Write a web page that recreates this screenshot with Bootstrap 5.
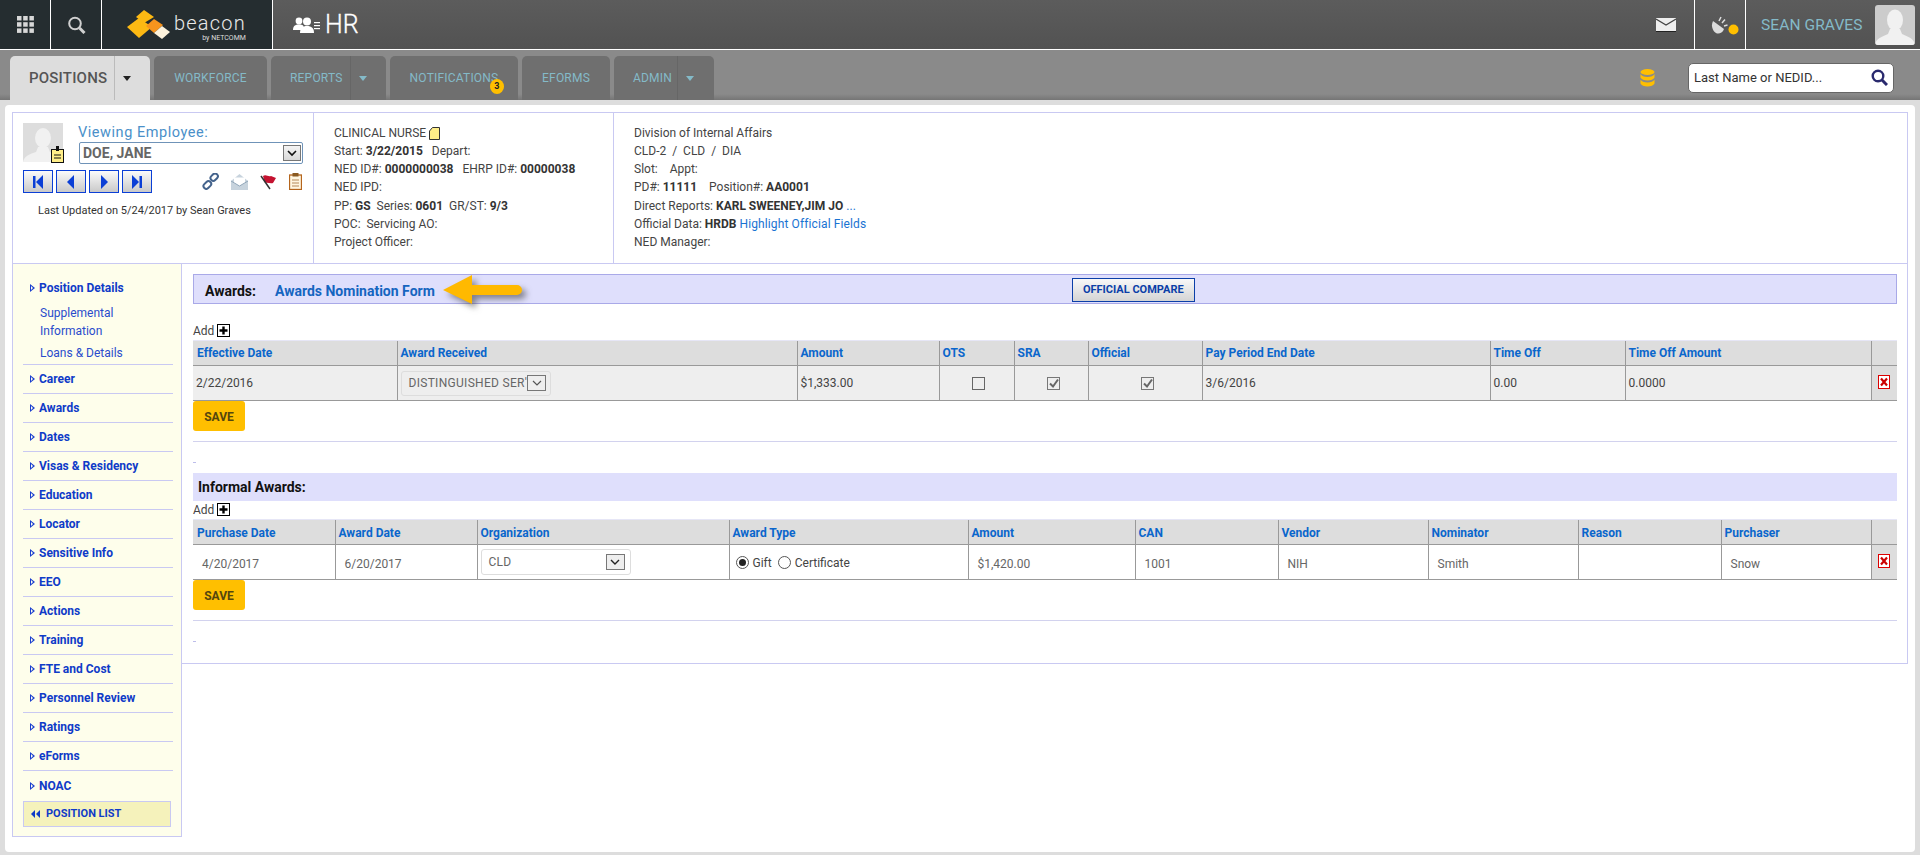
<!DOCTYPE html>
<html lang="en">
<head>
<meta charset="utf-8">
<title>Beacon HR</title>
<link href="https://cdn.jsdelivr.net/npm/bootstrap@5.3.0/dist/css/bootstrap.min.css" rel="stylesheet">
<style>
html,body{height:855px;overflow:hidden}
body{font-family:Roboto,"Liberation Sans",sans-serif;font-size:12px;color:#444;background:#ddd;line-height:18px}
a{text-decoration:none}
.topbar{height:50px;background:linear-gradient(#5c5c5c,#525252);border-bottom:1px solid #fff}
.darkcell{background:#252d30;border-right:1px solid #fff;height:49px}
.cell-a{width:51px}
.cell-b{width:51px}
.cell-logo{width:171px;padding-left:25px}
.logo-word{color:#e9e9e9;font-size:20px;font-weight:300;line-height:24px;letter-spacing:1.2px}
.logo-by{color:#ddd;font-size:7px;line-height:7px;text-align:right}
.logo-text{margin-left:3px;padding-top:3px}
.hr-icon{margin-left:20px}
.hr-title{color:#fff;font-size:25px;font-weight:300;margin-left:5px;-webkit-text-stroke:.3px #fff}
.mail-cell{width:40px;margin-right:8px}
.right-cell{height:49px;border-left:1px solid #fff;width:51px}
.sat-cell{padding-left:9px}
.user-cell{width:175px;padding-left:15px;padding-right:5px;color:#84bac8;font-size:15.5px;letter-spacing:.1px}
.user-pic{width:40px;height:40px;background:#ccc;border-radius:3px;overflow:hidden}
.tabbar{height:50px;background:linear-gradient(#8a8a8a 88%,#757575);padding:0 26px 0 10px}
.tabset{gap:4px;height:44px}
.tabitem{background:#6f6f6f;border-radius:5px 5px 0 0;color:#84bac8;height:44px;font-size:12px;letter-spacing:.2px;position:relative}
.tabitem.now{background:#ddd;color:#555;font-size:15px;font-weight:500;letter-spacing:.2px}
.tablabel{padding:0 19px}
.tabcaret{border-left:1px solid #666;height:100%;display:flex;align-items:center;padding-left:8px}
.caret-dn{width:0;height:0;border-left:4px solid transparent;border-right:4px solid transparent;border-top:5px solid currentColor}
.tabbadge{position:absolute;left:100px;top:23px;width:14px;height:15px;border-radius:50%;background:#ffbf00;color:#222;font-size:9px;font-weight:700;line-height:15px;text-align:center}
.quick{width:206px;height:30px;background:#fff;border:1px solid #666;border-radius:5px;padding:0 5px;font-size:13px;color:#333;margin-left:33px}
.sheet{background:#fff;margin:5px 5px 0;height:747px;border-radius:4px;padding:7px 7px 0}
.hbox{height:152px;border:1px solid #c9c9f2}
.hcol1{width:301px;border-right:1px solid #c9c9f2;padding:10px 10px 0}
.hcol2{width:300px;border-right:1px solid #c9c9f2;padding:11px 0 0 20px}
.hcol3{padding:11px 0 0 20px}
.info-line{height:18.17px;white-space:nowrap}
.info-line b{font-weight:700;color:#333}
.linky{color:#1a73d2;letter-spacing:.12px}
.pic-wrap{width:40px;height:39px;background:#ddd;position:relative;margin-right:15px}
.pic-badge{position:absolute;right:-1px;bottom:-1px}
.view-lbl{color:#4a90c9;font-size:14.5px;line-height:19px;letter-spacing:.55px}
.emp-select{width:224px;height:22px;margin-left:1px;border:1px solid #6f93b8;border-radius:2px;font-weight:700;font-size:14px;color:#666;padding-left:3px;line-height:20px}
.drop-box{border:1px solid #777;background:linear-gradient(#f4f4f4,#d8d8d8);width:18px;height:16px;display:flex;align-items:center;justify-content:center;margin-right:1px}
.navbtn{width:30px;height:23px;padding:0;border:1px solid #0b3fd6;border-radius:0;background:linear-gradient(#fbfbfb,#c9c9c9);display:flex;align-items:center;justify-content:center}
.navrow{gap:3px;margin-top:6px}
.tools{gap:12px;margin-left:47px}
.updated{margin:9px 0 0 15px;color:#333;font-size:11px}
.lower{align-items:flex-start}
.sidepane{width:170px;height:573px;background:#fefeeb;border:1px solid #c9c9f2;border-top:0;padding:14px 8px 0 10px;flex:none}
.sidepane .list-group-item{background:transparent;border:0;border-bottom:1px solid #c9c9f2;border-radius:0;height:29px;padding:0 0 0 7px;color:#0f3bc8;font-weight:700;font-size:12px;display:flex;align-items:center;gap:4px}
.sidepane .list-group-item.first{height:auto;display:block;padding-bottom:2px}
.tri{width:0;height:0;border-left:5px solid #1a3fcf;border-top:4px solid transparent;border-bottom:4px solid transparent;position:relative;flex:none;display:block}
.tri::after{content:"";position:absolute;left:-4px;top:-2px;border-left:2.5px solid #fefeeb;border-top:2px solid transparent;border-bottom:2px solid transparent}
.firsthead{display:flex;align-items:center;gap:4px;height:20px}
.subnav{display:block;font-weight:400;color:#2a4ccc;padding-left:10px;line-height:18px}
.subgap{margin-top:6px}
.subgap2{margin-top:4px}
.plist{width:148px;height:26px;margin-top:1px;background:#f5f2bb;border:1px solid #c9c9f2;color:#0f3bc8;font-weight:700;padding-left:7px;gap:6px;display:flex;align-items:center;font-size:11px}
.mainpane{flex:1;height:400px;border-right:1px solid #c9c9f2;border-bottom:1px solid #c9c9f2;padding:10px 10px 0 11px}
.titlebar{height:30px;background:#dfdffc;border:1px solid #a9a9e8;padding-left:11px;font-size:14px}
.titlebar b{color:#111;font-weight:700;padding-top:3px}
.titlebar a{color:#1565c0;font-weight:700;margin-left:19px;padding-top:3px}
.arrow{margin-left:8px;flex:none;overflow:visible;filter:drop-shadow(4px 4px 3px rgba(50,50,50,.55))}
.comparebtn{margin-left:550px;margin-top:2px;width:123px;height:24px;padding:0;border:1.5px solid #0b3fa8;border-radius:0;background:linear-gradient(#f8f8f8,#d4d4d4);color:#0b3fa8;font-size:11px;font-weight:700;line-height:20px}
.addrow{gap:3px;color:#444;height:36px;align-items:flex-end}
.addrow.tight{height:18px}
.addbox{width:13px;height:13px;margin-bottom:3px}
.table.awardgrid{table-layout:fixed;width:1704px;margin:0;font-size:12px;color:#444;border-collapse:collapse;--bs-table-bg:transparent}
.table.awardgrid>:not(caption)>*>*{padding:0 3px;border:0;border-left:1px solid #999;vertical-align:middle;box-shadow:none;white-space:nowrap;overflow:hidden}
.table.awardgrid>:not(caption)>*>*:first-child{border-left:0}
.table.awardgrid thead th{background:#ddd;color:#0a66cc;font-weight:700;height:25px;padding:0 3px;border-bottom:1px solid #999;border-top:1px solid #e6e6f6}
.table.awardgrid thead th:first-child{padding-left:4px}
.table.awardgrid.plain thead th{padding-top:1px}
.table.awardgrid tbody td{height:35px;background:#eee;border-bottom:1px solid #999}
.table.awardgrid.plain tbody td{background:#fff;color:#666;padding-top:4px}
.table.awardgrid tbody td.delcol,.table.awardgrid.plain tbody td.delcol{background:#ddd;text-align:center;padding:0 0 4px}
.table.awardgrid.plain tbody td.pad-in{padding-left:9px}
.table.awardgrid.plain tbody td.pad-tight{padding:0 3px}
.pick{display:inline-flex;align-items:center;border:1px solid #ddd;border-radius:3px;height:25px;color:#666;letter-spacing:.3px;background:#eee}
.pick-a{width:150px;padding-left:7px;justify-content:space-between;padding-right:5px;overflow:hidden}
.pick-b{width:150px;background:#fff;padding-left:7px;padding-right:5px;justify-content:space-between;height:26px}
.drop-lite{border:1px solid #777;width:19px;height:16px;display:flex;align-items:center;justify-content:center;flex:none;background:#eee}
.savebtn{background:#ffbf00;color:#54460f;font-weight:700;font-size:12px;border:0;border-radius:3px;height:30px;padding:1px 0 0;display:block;width:52px}
.rule{border:0;border-top:1px solid #d2d2ee;opacity:1;margin:10px 0 0}
.dash{width:3px;height:1px;background:#bdbdea;margin-top:20px}
.infobar{height:28px;background:#dfdffc;color:#111;font-weight:700;font-size:14px;padding-left:5px;margin-top:10px}
.optrow{gap:4px;color:#444;padding-left:3px;padding-top:1px}
.optgap{margin-right:2px}
.table.awardgrid tbody td.centerc{text-align:center;padding-left:7px}
</style>
</head>
<body>
<header class="topbar d-flex align-items-center">
  <div class="darkcell cell-a d-flex align-items-center justify-content-center">
    <svg width="17" height="17" viewBox="0 0 17 17" fill="#d8d8d8"><rect width="4.5" height="4.5"/><rect x="6.2" width="4.5" height="4.5"/><rect x="12.4" width="4.5" height="4.5"/><rect y="6.2" width="4.5" height="4.5"/><rect x="6.2" y="6.2" width="4.5" height="4.5"/><rect x="12.4" y="6.2" width="4.5" height="4.5"/><rect y="12.4" width="4.5" height="4.5"/><rect x="6.2" y="12.4" width="4.5" height="4.5"/><rect x="12.4" y="12.4" width="4.5" height="4.5"/></svg>
  </div>
  <div class="darkcell cell-b d-flex align-items-center justify-content-center">
    <svg width="19" height="18" viewBox="0 0 19 18" fill="none" stroke="#d0d0d0"><circle cx="8" cy="7.5" r="5.8" stroke-width="2"/><path d="M12.5 12l5 5" stroke-width="3"/></svg>
  </div>
  <div class="darkcell cell-logo d-flex align-items-center">
    <svg width="44" height="30" viewBox="0 0 44 30"><polygon points="17,0 27,7 17,13 9,7" fill="#fdb913"/><polygon points="0,17 12,8 25,17 12,28" fill="#fdb913"/><polygon points="19,16 27,9 36,15 27,23" fill="#f7941d"/><polygon points="27,23 35,16 43,22 35,29" fill="#fdf3dc"/></svg>
    <div class="logo-text"><div class="logo-word">beacon</div><div class="logo-by">by NETCOMM</div></div>
  </div>
  <svg class="hr-icon" width="27" height="16" viewBox="0 0 27 16" fill="#fff"><circle cx="6" cy="4" r="3.4"/><path d="M0 13c0-4 2-5.5 6-5.5s5 1 5 5.5z"/><circle cx="14" cy="4.5" r="4"/><path d="M7 16c0-5 2.500-7 7-7s7 2 7 7z"/><rect x="21" y="5" width="6" height="1.200"/><rect x="21" y="8" width="6" height="1.200"/><rect x="21" y="11" width="6" height="1.200"/></svg>
  <div class="hr-title">HR</div>
  <div class="ms-auto d-flex align-items-center justify-content-center mail-cell">
    <svg width="20" height="14" viewBox="0 0 20 14"><rect width="20" height="13" fill="#eee"/><rect y="13" width="20" height="1" fill="#222"/><path d="M0 1l10 6 10-6" fill="none" stroke="#444" stroke-width="1.200"/></svg>
  </div>
  <div class="right-cell sat-cell d-flex align-items-center justify-content-center">
    <svg width="28" height="20" viewBox="0 0 28 20"><path d="M2 6l11 8c-1.500 4-4.500 5-7 4.500C2 17.500-.5 11 2 6z" fill="#ddd"/><path d="M8 6l2-4M11 8l3-3.500M13 11l3.500-1" stroke="#ddd" stroke-width="1.500"/><circle cx="22.500" cy="14.500" r="5" fill="#ffbf00"/></svg>
  </div>
  <div class="right-cell user-cell d-flex align-items-center justify-content-between">
    <span>SEAN GRAVES</span>
    <div class="user-pic"><svg width="40" height="40" viewBox="0 0 40 40" fill="#f1f1f1"><ellipse cx="20" cy="15" rx="8" ry="10.500"/><path d="M0 40c1-7 7-8 13-11l2-5h10l2 5c6 3 12 4 13 11z"/></svg></div>
  </div>
</header>

<nav class="tabbar d-flex align-items-end justify-content-between">
  <div class="tabset d-flex">
    <div class="tabitem now d-flex align-items-center" style="width:140px"><span class="tablabel" style="width:104px">POSITIONS</span><span class="tabcaret" style="width:36px;border-color:#bbb"><i class="caret-dn" style="color:#222"></i></span></div>
    <div class="tabitem d-flex align-items-center justify-content-center" style="width:113px">WORKFORCE</div>
    <div class="tabitem d-flex align-items-center" style="width:115px"><span class="tablabel" style="width:79px">REPORTS</span><span class="tabcaret" style="width:36px"><i class="caret-dn"></i></span></div>
    <div class="tabitem d-flex align-items-center justify-content-center" style="width:128px">NOTIFICATIONS<span class="tabbadge">3</span></div>
    <div class="tabitem d-flex align-items-center justify-content-center" style="width:88px">EFORMS</div>
    <div class="tabitem d-flex align-items-center" style="width:100px"><span class="tablabel" style="width:63px">ADMIN</span><span class="tabcaret" style="width:37px"><i class="caret-dn"></i></span></div>
  </div>
  <div class="d-flex align-items-center" style="height:50px;padding-top:5px">
    <svg width="15" height="18" viewBox="0 0 15 18" fill="#ffbf00"><ellipse cx="7.500" cy="3" rx="7" ry="3"/><path d="M.5 5c1 2 3.500 3 7 3s6-1 7-3v3.500c-1 2-3.500 3-7 3s-6-1-7-3z"/><path d="M.5 10.500c1 2 3.500 3 7 3s6-1 7-3V14.500c-1 2-3.500 3-7 3s-6-1-7-3z"/></svg>
    <div class="quick d-flex align-items-center justify-content-between"><span>Last Name or NEDID...</span>
      <svg width="17" height="17" viewBox="0 0 17 17" fill="none" stroke="#2a2a6e"><circle cx="7" cy="7" r="5.300" stroke-width="2.400"/><path d="M11 11l5 5" stroke-width="3"/></svg>
    </div>
  </div>
</nav>

<main class="sheet">
  <section class="hbox d-flex">
    <div class="hcol1">
      <div class="d-flex">
        <div class="pic-wrap">
          <svg width="40" height="39" viewBox="0 0 40 39" fill="#f1f1f1"><ellipse cx="20" cy="15" rx="8" ry="10"/><path d="M0 39c1-6 7-8 13-10l2-5h10l2 5c6 2 12 4 13 10z"/></svg>
          <svg class="pic-badge" width="13" height="17" viewBox="0 0 13 17"><rect x=".5" y="3.500" width="12" height="13" fill="#ffee88" stroke="#111"/><rect x="5" y="0" width="3" height="5" fill="#111"/><path d="M3 9h7M3 12h7" stroke="#111"/></svg>
        </div>
        <div>
          <div class="view-lbl">Viewing Employee:</div>
          <div class="emp-select d-flex justify-content-between align-items-center"><span>DOE, JANE</span><span class="drop-box"><svg width="10" height="7" viewBox="0 0 10 7"><path d="M1 1l4 4 4-4" fill="none" stroke="#111" stroke-width="1.600"/></svg></span></div>
        </div>
      </div>
      <div class="d-flex navrow align-items-center">
        <button class="btn navbtn" type="button" aria-label="First"><svg width="12" height="14" viewBox="0 0 12 14" fill="#0b3fd6"><rect x="1" y="1" width="2.500" height="12"/><polygon points="11,0 4,7 11,14"/></svg></button>
        <button class="btn navbtn" type="button" aria-label="Previous"><svg width="8" height="14" viewBox="0 0 8 14" fill="#0b3fd6"><polygon points="7,0 0,7 7,14"/></svg></button>
        <button class="btn navbtn" type="button" aria-label="Next"><svg width="8" height="14" viewBox="0 0 8 14" fill="#0b3fd6"><polygon points="1,0 8,7 1,14"/></svg></button>
        <button class="btn navbtn" type="button" aria-label="Last"><svg width="12" height="14" viewBox="0 0 12 14" fill="#0b3fd6"><rect x="8.500" y="1" width="2.500" height="12"/><polygon points="1,0 8,7 1,14"/></svg></button>
        <div class="d-flex tools align-items-center">
          <svg width="17" height="17" viewBox="0 0 17 17" fill="none" stroke="#44638c" stroke-width="2"><rect x="8" y="1.500" width="8" height="5.500" rx="2.700" transform="rotate(-45 12 4)"/><rect x="1" y="9.500" width="8.500" height="5.500" rx="2.700" transform="rotate(-45 5 12)"/></svg>
          <svg width="17" height="16" viewBox="0 0 17 16"><path d="M0 7l8.500-7L17 7v9H0z" fill="#c7d3dd"/><path d="M3 3.500h11V9l-5.500 3L3 9z" fill="#fff"/><path d="M0 7l8.500 5L17 7" fill="none" stroke="#8fa5b8"/></svg>
          <svg width="17" height="16" viewBox="0 0 17 16"><path d="M3 2c3-2 5 1 8 0l5 2-3 5c-3 1-5-1-8 0z" fill="#c41230"/><path d="M1 2l9 13" stroke="#333" stroke-width="1.500"/></svg>
          <svg width="13" height="17" viewBox="0 0 13 17"><rect x=".5" y="2" width="12" height="14.500" fill="#fff6e0" stroke="#b5651d" stroke-width="1.300"/><rect x="3.500" y="0" width="6" height="3.500" fill="#8a5a20"/><path d="M3 7h7M3 10h7M3 13h7" stroke="#b5895a"/></svg>
        </div>
      </div>
      <div class="updated">Last Updated on 5/24/2017 by Sean Graves</div>
    </div>
    <div class="hcol2">
      <div class="info-line d-flex align-items-center" style="gap:3px">CLINICAL NURSE <svg width="11" height="13" viewBox="0 0 11 13"><path d="M.5 4L3.500.5h7v12H.5z" fill="#ffee88" stroke="#333"/></svg></div>
      <div class="info-line">Start: <b>3/22/2015</b> &nbsp; Depart:</div>
      <div class="info-line">NED ID#: <b>0000000038</b> &nbsp; EHRP ID#: <b>00000038</b></div>
      <div class="info-line">NED IPD:</div>
      <div class="info-line">PP: <b>GS</b> &nbsp;Series: <b>0601</b> &nbsp;GR/ST: <b>9/3</b></div>
      <div class="info-line">POC: &nbsp;Servicing AO:</div>
      <div class="info-line">Project Officer:</div>
    </div>
    <div class="hcol3">
      <div class="info-line">Division of Internal Affairs</div>
      <div class="info-line">CLD-2 &nbsp;/ &nbsp;CLD &nbsp;/ &nbsp;DIA</div>
      <div class="info-line">Slot: &nbsp;&nbsp; Appt:</div>
      <div class="info-line">PD#: <b>11111</b> &nbsp;&nbsp; Position#: <b>AA0001</b></div>
      <div class="info-line">Direct Reports: <b>KARL SWEENEY,JIM JO</b> <a class="linky" href="#">...</a></div>
      <div class="info-line">Official Data: <b>HRDB</b> <a class="linky" href="#">Highlight Official Fields</a></div>
      <div class="info-line">NED Manager:</div>
    </div>
  </section>

  <div class="lower d-flex">
    <aside class="sidepane">
      <div class="list-group list-group-flush">
        <div class="list-group-item first">
          <div class="firsthead"><i class="tri"></i>Position Details</div>
          <a class="subnav subgap" href="#">Supplemental<br>Information</a>
          <a class="subnav subgap2" href="#">Loans &amp; Details</a>
        </div>
        <a class="list-group-item" href="#"><i class="tri"></i>Career</a>
        <a class="list-group-item" href="#"><i class="tri"></i>Awards</a>
        <a class="list-group-item" href="#"><i class="tri"></i>Dates</a>
        <a class="list-group-item" href="#"><i class="tri"></i>Visas &amp; Residency</a>
        <a class="list-group-item" href="#"><i class="tri"></i>Education</a>
        <a class="list-group-item" href="#"><i class="tri"></i>Locator</a>
        <a class="list-group-item" href="#"><i class="tri"></i>Sensitive Info</a>
        <a class="list-group-item" href="#"><i class="tri"></i>EEO</a>
        <a class="list-group-item" href="#"><i class="tri"></i>Actions</a>
        <a class="list-group-item" href="#"><i class="tri"></i>Training</a>
        <a class="list-group-item" href="#"><i class="tri"></i>FTE and Cost</a>
        <a class="list-group-item" href="#"><i class="tri"></i>Personnel Review</a>
        <a class="list-group-item" href="#"><i class="tri"></i>Ratings</a>
        <a class="list-group-item" href="#"><i class="tri"></i>eForms</a>
        <a class="list-group-item" href="#"><i class="tri"></i>NOAC</a>
      </div>
      <div class="plist"><svg width="9" height="8" viewBox="0 0 9 8" fill="#0f3bc8"><polygon points="4,0 0,4 4,8"/><polygon points="9,0 5,4 9,8"/></svg>POSITION LIST</div>
    </aside>

    <div class="mainpane">
      <div class="titlebar d-flex align-items-center">
        <b>Awards:</b><a href="#">Awards Nomination Form</a>
        <svg class="arrow" width="79" height="29" viewBox="0 0 79 29"><path d="M0 15L29 0v10h45a5 5 0 0 1 0 10H29v9z" fill="#ffb900"/></svg>
        <button class="btn comparebtn" type="button">OFFICIAL COMPARE</button>
      </div>
      <div class="d-flex addrow">Add <svg class="addbox" viewBox="0 0 13 13"><rect x=".5" y=".5" width="12" height="12" fill="#fff" stroke="#000"/><path d="M6.500 2.500v8M2.500 6.500h8" stroke="#000" stroke-width="2.400"/></svg></div>
      <table class="table awardgrid">
        <colgroup><col width="204"><col width="400"><col width="142"><col width="75"><col width="74"><col width="114"><col width="288"><col width="135"><col width="246"><col width="26"></colgroup>
        <thead><tr><th>Effective Date</th><th>Award Received</th><th>Amount</th><th>OTS</th><th>SRA</th><th>Official</th><th>Pay Period End Date</th><th>Time Off</th><th>Time Off Amount</th><th></th></tr></thead>
        <tbody><tr>
          <td>2/22/2016</td>
          <td><span class="pick pick-a"><span>DISTINGUISHED SER'</span><span class="drop-lite"><svg width="10" height="6" viewBox="0 0 10 6"><path d="M1 1l4 4 4-4" fill="none" stroke="#555" stroke-width="1.200"/></svg></span></span></td>
          <td>$1,333.00</td>
          <td class="centerc"><svg width="13" height="13" viewBox="0 0 13 13"><rect x=".5" y=".5" width="12" height="12" fill="#eee" stroke="#666"/></svg></td>
          <td class="centerc"><svg width="13" height="13" viewBox="0 0 13 13"><rect x=".5" y=".5" width="12" height="12" fill="#eee" stroke="#777"/><path d="M3 6.500l3 3 5-7" fill="none" stroke="#666" stroke-width="2"/></svg></td>
          <td class="centerc"><svg width="13" height="13" viewBox="0 0 13 13"><rect x=".5" y=".5" width="12" height="12" fill="#eee" stroke="#777"/><path d="M3 6.500l3 3 5-7" fill="none" stroke="#666" stroke-width="2"/></svg></td>
          <td>3/6/2016</td><td>0.00</td><td>0.0000</td>
          <td class="delcol"><svg width="12" height="14" viewBox="0 0 12 14"><rect x=".5" y=".5" width="11" height="13" fill="#fff" stroke="#d00"/><path d="M3 3.500l6 7M9 3.500l-6 7" stroke="#c00" stroke-width="2.200"/></svg></td>
        </tr></tbody>
      </table>
      <button class="btn savebtn" type="button">SAVE</button>
      <hr class="rule">
      <div class="dash"></div>
      <div class="infobar d-flex align-items-center">Informal Awards:</div>
      <div class="d-flex addrow tight">Add <svg class="addbox" viewBox="0 0 13 13"><rect x=".5" y=".5" width="12" height="12" fill="#fff" stroke="#000"/><path d="M6.500 2.500v8M2.500 6.500h8" stroke="#000" stroke-width="2.400"/></svg></div>
      <table class="table awardgrid plain">
        <colgroup><col width="142"><col width="142"><col width="252"><col width="239"><col width="167"><col width="143"><col width="150"><col width="150"><col width="143"><col width="150"><col width="26"></colgroup>
        <thead><tr><th>Purchase Date</th><th>Award Date</th><th>Organization</th><th>Award Type</th><th>Amount</th><th>CAN</th><th>Vendor</th><th>Nominator</th><th>Reason</th><th>Purchaser</th><th></th></tr></thead>
        <tbody><tr>
          <td class="pad-in">4/20/2017</td><td class="pad-in">6/20/2017</td>
          <td class="pad-tight"><span class="pick pick-b"><span>CLD</span><span class="drop-lite"><svg width="10" height="6" viewBox="0 0 10 6"><path d="M1 1l4 4 4-4" fill="none" stroke="#222" stroke-width="1.400"/></svg></span></span></td>
          <td class="pad-tight"><div class="d-flex align-items-center optrow">
            <svg width="13" height="13" viewBox="0 0 13 13"><circle cx="6.500" cy="6.500" r="6" fill="#fff" stroke="#555"/><circle cx="6.500" cy="6.500" r="3.500" fill="#222"/></svg><span class="optgap">Gift</span>
            <svg width="13" height="13" viewBox="0 0 13 13"><circle cx="6.500" cy="6.500" r="6" fill="#fff" stroke="#555"/></svg><span>Certificate</span>
          </div></td>
          <td class="pad-in">$1,420.00</td><td class="pad-in">1001</td><td class="pad-in">NIH</td><td class="pad-in">Smith</td><td></td><td class="pad-in">Snow</td>
          <td class="delcol"><svg width="12" height="14" viewBox="0 0 12 14"><rect x=".5" y=".5" width="11" height="13" fill="#fff" stroke="#d00"/><path d="M3 3.500l6 7M9 3.500l-6 7" stroke="#c00" stroke-width="2.200"/></svg></td>
        </tr></tbody>
      </table>
      <button class="btn savebtn" type="button">SAVE</button>
      <hr class="rule">
      <div class="dash"></div>
    </div>
  </div>
</main>
<script src="https://cdn.jsdelivr.net/npm/bootstrap@5.3.0/dist/js/bootstrap.bundle.min.js"></script>
</body>
</html>
